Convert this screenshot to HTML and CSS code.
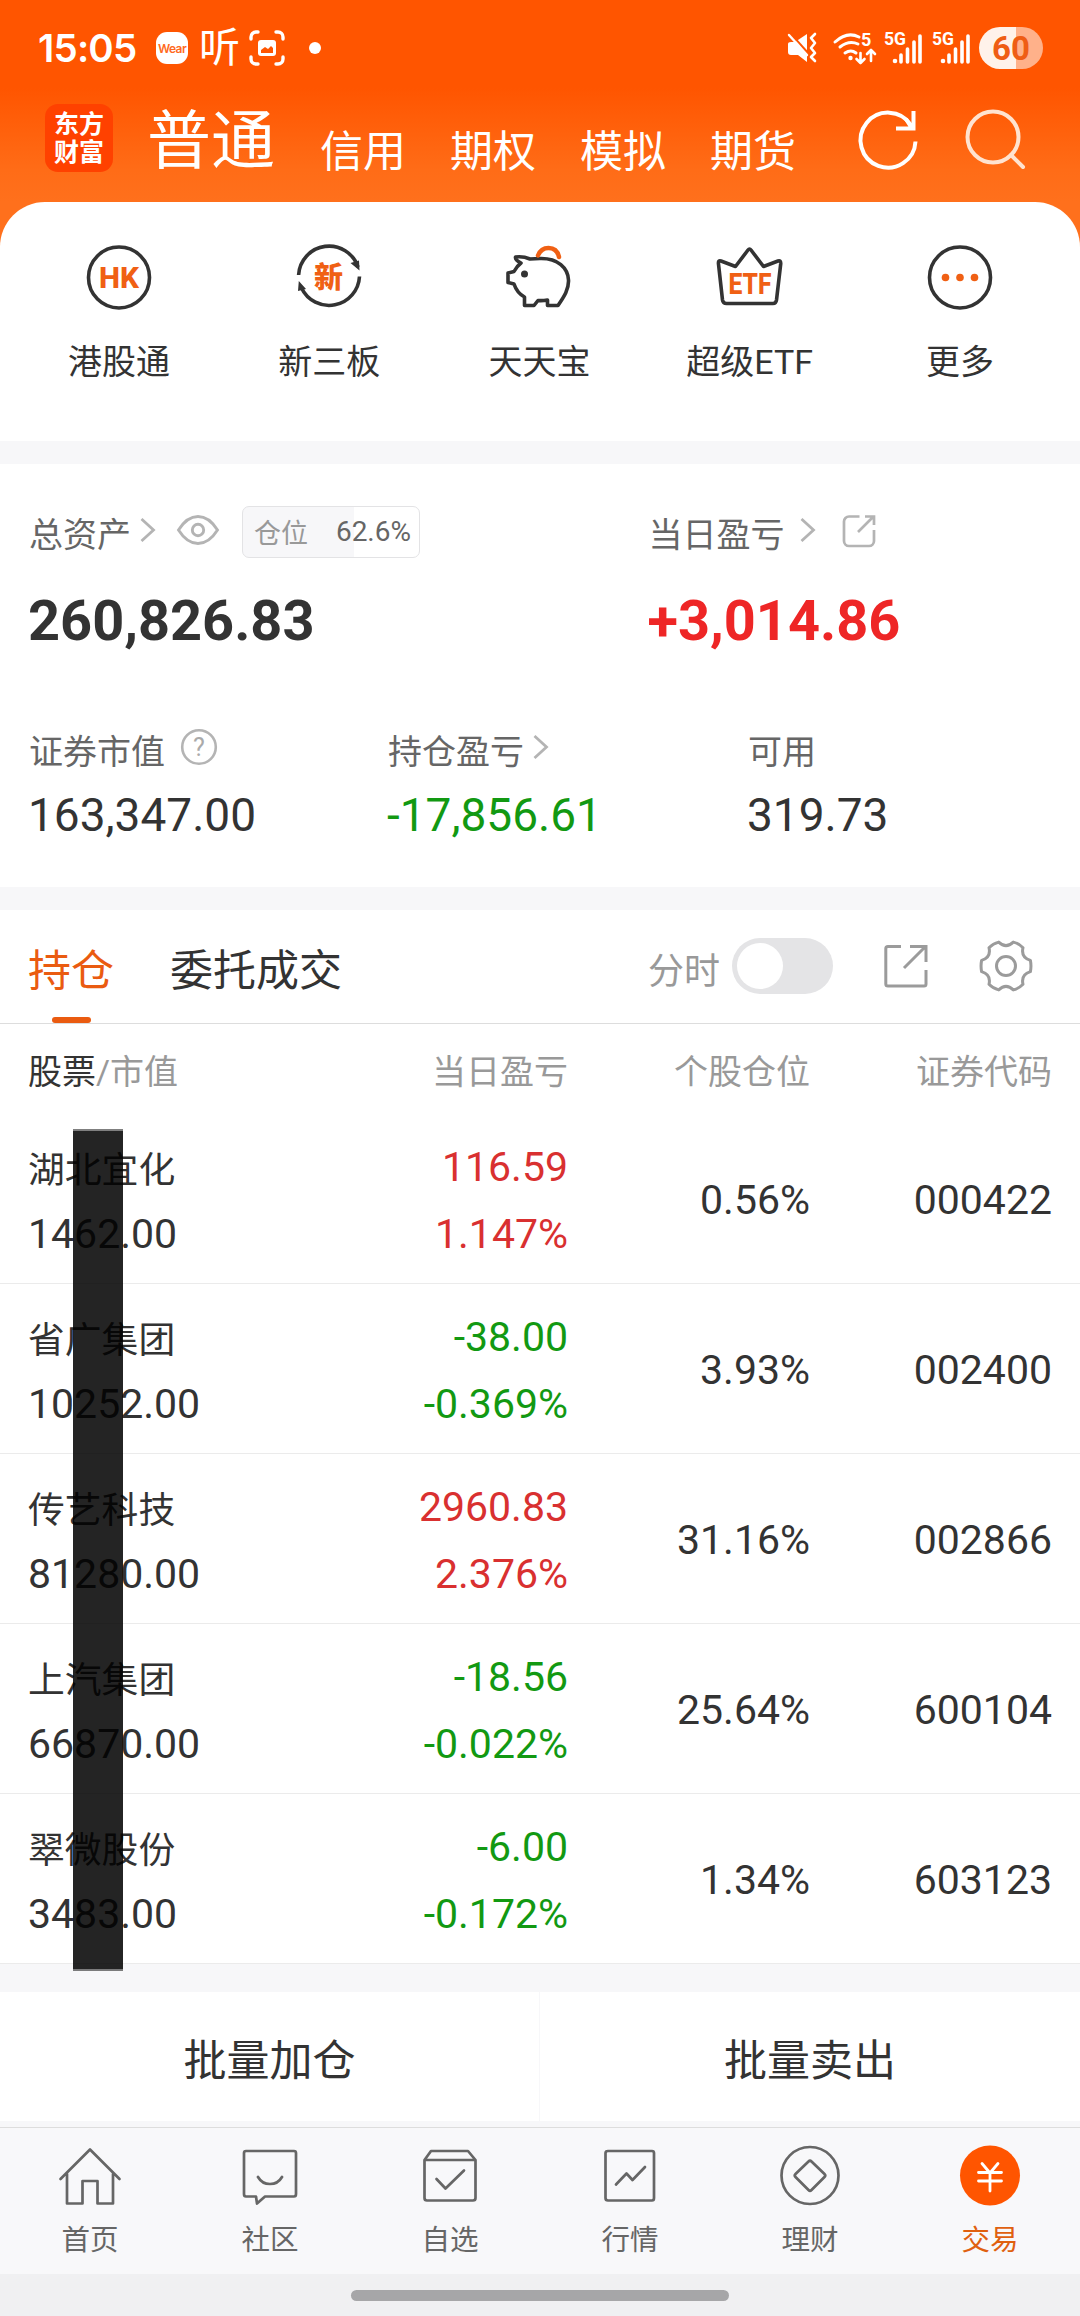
FILE: index.html
```html
<!DOCTYPE html>
<html lang="zh-CN">
<head>
<meta charset="utf-8">
<title>东方财富 - 交易</title>
<link rel="stylesheet" href="styles.css">
</head>
<body>
<header class="top">
  <div class="status">
    <span class="clock">15:05</span>
    <span class="wear">Wear</span>
    <span class="listen">听</span>
    <svg class="shot" width="36" height="36" viewBox="0 0 36 36" fill="none" stroke="#fff" stroke-width="3.4" stroke-linecap="round"><path d="M2 9V7a5 5 0 0 1 5-5h2M27 2h2a5 5 0 0 1 5 5v2M34 27v2a5 5 0 0 1-5 5h-2M9 34H7a5 5 0 0 1-5-5v-2"/><rect x="9" y="10" width="18" height="16" rx="3" fill="#fff" stroke="none"/><path d="M12 23v-3l4-3 3 2 3-3 2 2v5z" fill="#ff5500" stroke="none"/></svg>
    <span class="dot"></span>
    <div class="status-right">
      <svg width="30" height="30" viewBox="0 0 30 30"><path d="M8 9L20 1v18zM1 11q0-2 3-2h4l12 12v8l-9-7H4q-3 0-3-3z" fill="#fff"/><path d="M4 1l18 20" stroke="#ff5500" stroke-width="2"/><path d="M2 2l18 20" stroke="#fff" stroke-width="2.400" stroke-linecap="round"/><path d="M28 1l-4 4 4 5-4 5 4 5-4 4 4 4" fill="none" stroke="#fff" stroke-width="2.600" stroke-linecap="round" stroke-linejoin="round"/></svg>
      <svg class="wifi" width="44" height="42" viewBox="0 -4 44 42" fill="none" stroke="#fff" stroke-width="3" stroke-linecap="round"><path d="M2 11q12-11 24-5M7 16q9-7 18-3M12 22q6-4 11 0"/><circle cx="17.5" cy="27" r="2.2" fill="#fff" stroke="none"/><path d="M27.500 22v10m-4-4l4 4 4-4M38 30V19m-4 4l4-4 4 4" stroke-width="2.600" stroke-linejoin="round"/><text x="28" y="15" class="svg-small">5</text></svg>
      <svg class="signal" width="40" height="44" viewBox="0 -4 40 44"><text x="0" y="14.500" class="svg-small" textLength="22" lengthAdjust="spacingAndGlyphs">5G</text><circle cx="11" cy="31" r="2.300" fill="#fff"/><path d="M17 25v7M23.500 19v13M30 12v20M36 6v26" stroke="#fff" stroke-width="3.600" stroke-linecap="round"/></svg>
      <svg class="signal" width="40" height="44" viewBox="0 -4 40 44"><text x="0" y="14.500" class="svg-small" textLength="22" lengthAdjust="spacingAndGlyphs">5G</text><circle cx="11" cy="31" r="2.300" fill="#fff"/><path d="M17 25v7M23.500 19v13M30 12v20M36 6v26" stroke="#fff" stroke-width="3.600" stroke-linecap="round"/></svg>
      <span class="battery">60</span>
    </div>
  </div>
  <div class="titlebar">
    <div class="logo"><span>东方</span><span>财富</span></div>
    <h1>普通</h1>
    <nav class="modes"><span>信用</span><span>期权</span><span>模拟</span><span>期货</span></nav>
    <svg class="refresh" width="62" height="62" viewBox="0 0 62 62" fill="none" stroke="#fff" stroke-width="4"><path d="M58.500 33.500A27.500 27.500 0 1 1 54 17"/><path d="M56.500 3v17.500H39M54 19L49 11"/></svg>
    <svg class="search" width="62" height="62" viewBox="0 0 62 62" fill="none" stroke="#ffe3d0" stroke-width="4" stroke-linecap="round"><circle cx="28" cy="28" r="25.500"/><path d="M46 46l12 12"/></svg>
  </div>
</header>
<main>
  <section class="quick">
    <div class="quick-item"><svg width="66" height="66" viewBox="0 0 66 66"><circle cx="33" cy="32.500" r="30.500" class="ring"/><text x="13" y="43" class="mark" font-size="29" textLength="40" lengthAdjust="spacingAndGlyphs">HK</text></svg><span>港股通</span></div>
    <div class="quick-item"><svg width="66" height="66" viewBox="0 0 66 66"><path class="ring" d="M2.600 30A30.500 30.500 0 0 1 62 22M63.500 31.500A30.500 30.500 0 0 1 5.500 43"/><path d="M54.500 18l8.500-2.500.5 10zM2 46l.8-10 7.200 8z" fill="#333"/><text x="18" y="43" class="mark cjk" font-size="29">新</text></svg><span>新三板</span></div>
    <div class="quick-item"><svg width="66" height="66" viewBox="0 0 66 66"><path class="ring" stroke-linejoin="round" d="M9.500 12Q17 11 24 14Q29 13.500 34 13.500C52 13 62 23 62.500 35C63 45 57 53 52 60.500H41.500V55Q36 56 32 55.500L28 60.500H18.500V52Q11 48 8 39L2 37.500V28L8 26.500Q11 21 15 18Q9 15 9.500 12z"/><circle cx="18.500" cy="29" r="3.500" fill="#333"/><path d="M32 10.500Q35 3 42.500 3Q51 3 53 12" fill="none" stroke="#f06014" stroke-width="4.500" stroke-linecap="round"/></svg><span>天天宝</span></div>
    <div class="quick-item"><svg width="66" height="66" viewBox="0 0 66 66"><path class="ring" stroke-linejoin="round" d="M4 16L18.500 21.500L31 5Q32.500 3 34 5L46.500 21.500L61 16Q64 15 63.700 19L59.500 55Q59 58.500 56 58.500H9.500Q6 58.500 5.500 55L1.500 19Q1 15 4 16z"/><text x="11.500" y="48.500" class="mark" font-size="30" textLength="43" lengthAdjust="spacingAndGlyphs">ETF</text></svg><span>超级ETF</span></div>
    <div class="quick-item"><svg width="66" height="66" viewBox="0 0 66 66"><circle cx="33" cy="32.500" r="30.500" class="ring"/><g fill="#f06014"><circle cx="18.500" cy="32.500" r="3.800"/><circle cx="33" cy="32.500" r="3.800"/><circle cx="47.500" cy="32.500" r="3.800"/></g></svg><span>更多</span></div>
  </section>

  <section class="assets">
    <div class="summary">
      <div class="total">
        <div class="label"><span>总资产</span><svg class="chev" width="16" height="26" viewBox="0 0 16 26"><path d="M1.500 2l12 11-12 11"/></svg>
          <svg class="eye" width="44" height="32" viewBox="0 0 44 32" fill="none" stroke="#b4b4b4" stroke-width="2.900"><path d="M2.500 16Q11 2.500 22 2.500T41.500 16Q33 29.500 22 29.500T2.500 16z"/><circle cx="22" cy="16" r="5.700"/></svg>
          <div class="ratio"><em>仓位</em><b>62.6%</b></div></div>
        <strong>260,826.83</strong>
      </div>
      <div>
        <div class="label"><span>当日盈亏</span><svg class="chev wide" width="16" height="26" viewBox="0 0 16 26"><path d="M1.500 2l12 11-12 11"/></svg>
          <svg class="share" width="34" height="34" viewBox="0 0 34 34" fill="none" stroke="#b4b4b4" stroke-width="2.700"><path d="M17.500 2.500H7a5 5 0 0 0-5 5V27a5 5 0 0 0 5 5h20a5 5 0 0 0 5-5V16M16 18L31 3M23 2.500h9V11"/></svg></div>
        <strong class="hot">+3,014.86</strong>
      </div>
    </div>
    <div class="details">
      <div><div class="label"><span>证券市值</span><svg class="help" width="38" height="38" viewBox="0 0 38 38"><circle cx="19" cy="19" r="16.800"/><text x="19" y="28" text-anchor="middle">?</text></svg></div><p>163,347.00</p></div>
      <div><div class="label"><span>持仓盈亏</span><svg class="chev" width="16" height="26" viewBox="0 0 16 26"><path d="M1.500 2l12 11-12 11"/></svg></div><p class="down">-17,856.61</p></div>
      <div><div class="label"><span>可用</span></div><p>319.73</p></div>
    </div>
  </section>

  <section class="holdings">
    <div class="tabs">
      <span class="tab active">持仓</span><span class="tab">委托成交</span>
      <span class="minute">分时</span><span class="switch"></span>
      <svg class="open" width="44" height="44" viewBox="0 0 44 44" fill="none" stroke="#9b9b9b" stroke-width="3"><path d="M17 2.500H4Q1.800 2.500 1.800 4.500V40Q1.800 42 4 42H40Q42 42 42 40V26M20 24L41 3M26 2.500h16V18"/></svg>
      <svg class="gear" width="54" height="54" viewBox="-27 -27 54 54" fill="none" stroke="#9b9b9b" stroke-width="3" stroke-linejoin="round"><path d="M24.400-5.600Q25.500 0 24.400 5.600Q14.700 8.500 17 18.300Q13 22.500 7.300 23.900Q0 17-7.300 23.900Q-13 22.500-17 18.300Q-14.700 8.500-24.400 5.600Q-25.500 0-24.400-5.600Q-14.700-8.500-17-18.300Q-13-22.500-7.300-23.900Q0-17 7.300-23.900Q13-22.500 17-18.300Q14.700-8.500 24.400-5.600z"/><circle r="9.500"/></svg>
    </div>
    <div class="row thead"><span><i>股票</i>/市值</span><span>当日盈亏</span><span>个股仓位</span><span>证券代码</span></div>
    <div class="row"><div class="stock"><span>湖北宜化</span><span>1462.00</span></div><div class="pnl up"><span>116.59</span><span>1.147%</span></div><span>0.56%</span><span>000422</span></div>
    <div class="row"><div class="stock"><span>省广集团</span><span>10252.00</span></div><div class="pnl down"><span>-38.00</span><span>-0.369%</span></div><span>3.93%</span><span>002400</span></div>
    <div class="row"><div class="stock"><span>传艺科技</span><span>81280.00</span></div><div class="pnl up"><span>2960.83</span><span>2.376%</span></div><span>31.16%</span><span>002866</span></div>
    <div class="row"><div class="stock"><span>上汽集团</span><span>66870.00</span></div><div class="pnl down"><span>-18.56</span><span>-0.022%</span></div><span>25.64%</span><span>600104</span></div>
    <div class="row"><div class="stock"><span>翠微股份</span><span>3483.00</span></div><div class="pnl down"><span>-6.00</span><span>-0.172%</span></div><span>1.34%</span><span>603123</span></div>
    <div class="mask"></div>
  </section>

  <section class="batch"><span>批量加仓</span><span>批量卖出</span></section>
</main>
<nav class="bottom">
  <div><svg width="64" height="64" viewBox="0 0 64 64"><path d="M2.500 34L32 4.500L61.500 34M9 29V58.500H24.500V36H39.500V58.500H55V29"/></svg><span>首页</span></div>
  <div><svg width="64" height="64" viewBox="0 0 64 64"><path d="M8 6H56Q58 6 58 8V49Q58 51.500 56 51.500H27L19 58.500L18 51.500H8Q6 51.500 6 49V8Q6 6 8 6zM20 32Q24 39 32 39T44 32"/></svg><span>社区</span></div>
  <div><svg width="64" height="64" viewBox="0 0 64 64"><path d="M6.500 15L13 6H50L57.500 15V53Q57.500 55.500 55 55.500H9Q6.500 55.500 6.500 53zM6.500 15H57.500M18.500 34L27.500 43.500L46 25.500"/></svg><span>自选</span></div>
  <div><svg width="64" height="64" viewBox="0 0 64 64"><path d="M10 6H54Q56 6 56 8V53Q56 55.500 54 55.500H10Q7.500 55.500 7.500 53V8Q7.500 6 10 6zM18 39.500L28.500 28.500L34.500 35L47 22"/></svg><span>行情</span></div>
  <div><svg width="64" height="64" viewBox="0 0 64 64"><circle cx="32" cy="30.500" r="28.500"/><path d="M30.500 16.500Q32 15 33.500 16.500L46.500 29Q48 30.500 46.500 32L33.500 45Q32 46.500 30.500 45L17.500 32Q16 30.500 17.500 29z"/></svg><span>理财</span></div>
  <div class="current"><svg width="64" height="64" viewBox="0 0 64 64"><circle cx="32" cy="30.500" r="30" fill="#ff5500" stroke="none"/><path d="M24 18.500L32 28L40 18.500M20.500 27.500H43.500M20.500 36H43.500M32 28V46" stroke="#fff" stroke-width="2.800"/></svg><span>交易</span></div>
</nav>
<footer class="gesture"><span></span></footer>
</body>
</html>
```
FILE: styles.css
```css
* { box-sizing: border-box; }
body {
  margin: 0;
  width: 1080px;
  height: 2316px;
  overflow: hidden;
  background: #f7f7f9;
  color: #333;
  font-family: Roboto, "Noto Sans CJK SC", sans-serif;
  font-size: 34px;
}
svg { display: block; flex: none; overflow: visible; }
h1, p { margin: 0; font-weight: 400; }

/* header */
.top {
  height: 250px;
  background: linear-gradient(#ff5500 0, #ff5500 88px, #ff6c17 170px, #ff701c 202px);
  color: #fff;
}
.status { height: 96px; display: flex; align-items: center; padding: 0 37px 0 38px; }
.clock { width: 100px; font: 600 38.5px/40px Inter, sans-serif; letter-spacing: -.8px; white-space: nowrap; }
.wear {
  width: 32px; height: 32px; margin-left: 18px;
  border-radius: 11px; background: #fff; color: #ff6a22;
  font: 600 12px/33px Inter, sans-serif; letter-spacing: -.6px; text-align: center;
}
.listen { margin-left: 11px; font-size: 41px; line-height: 48px; width: 41px; }
.shot { margin-left: 9px; }
.dot { width: 12px; height: 12px; margin-left: 24px; border-radius: 50%; background: #fff; }
.status-right { margin-left: auto; display: flex; align-items: center; }
.wifi { margin-left: 16px; }
.signal { margin-left: 7px; }
.signal + .signal { margin-left: 8px; }
.svg-small { font: 700 18px Roboto, sans-serif; fill: #fff; stroke: none; }
.battery {
  width: 64px; height: 42px; margin-left: 7px;
  border-radius: 21px;
  background: linear-gradient(90deg, #fff2ea 58%, #ffb18a 58%);
  color: #ef5d14;
  font-size: 33px; font-weight: 700; line-height: 43px; text-align: center;
}
.titlebar { height: 106px; display: flex; align-items: center; padding-left: 45px; }
.logo {
  width: 68px; height: 68px; margin-bottom: 22px; padding-top: 7px;
  display: flex; flex-direction: column; align-items: center;
  border-radius: 13px; background: #ff4100;
  font-size: 25px; font-weight: 700; line-height: 28px;
}
.titlebar h1 { margin: 0 0 14px 34px; font-size: 64px; line-height: 72px; }
.modes { display: flex; gap: 44px; margin: 5px 0 0 45px; font-size: 43px; line-height: 50px; }
.refresh { margin: 0 0 21px 61px; }
.search { margin: 0 0 19px 46px; }

/* shortcuts */
main { margin-top: -48px; }
.quick {
  height: 239px; padding: 43px 15px 0 14px;
  display: grid; grid-template-columns: repeat(5, 1fr);
  border-radius: 45px 45px 0 0; background: #fff;
}
.quick-item { display: flex; flex-direction: column; align-items: center; }
.quick-item span { margin-top: 31px; line-height: 40px; }
.ring { fill: none; stroke: #333; stroke-width: 3.6; }
.mark { font-family: Roboto, sans-serif; font-weight: 800; fill: #f06014; }
.mark.cjk { font-family: "Noto Sans CJK SC", sans-serif; }

/* assets */
.assets { height: 423px; margin-top: 23px; padding: 42px 29px 0; background: #fff; }
.label { display: flex; align-items: center; height: 51px; color: #666; }
.label > span { padding-top: 6px; line-height: 46px; }
.chev { margin: 0 0 4px 9px; fill: none; stroke: #b4b4b4; stroke-width: 2.8; }
.chev.wide { margin-left: 15px; }
.summary { display: grid; grid-template-columns: 619.500px 1fr; }
.summary strong { display: block; margin: 29px 0 0 -1px; font-size: 55.9px; line-height: 70px; }
.eye { margin: 0 0 3px 20px; }
.share { margin: 0 0 1px 26px; }
.hot { color: #ee2626; }
.ratio {
  width: 178px; height: 52px; margin-left: 22px; padding: 0 8px 0 11px;
  display: flex; flex: none; justify-content: space-between; align-items: center;
  border: 1px solid #e3e3e5; border-radius: 7px;
  background: linear-gradient(90deg, #f7f7f9 63%, #fff 63%);
}
.ratio em { font-style: normal; font-size: 27px; color: #999; margin-bottom: 1px; }
.ratio b { font-weight: 400; font-size: 28px; }
.details { display: grid; grid-template-columns: 359px 360px 1fr; margin-top: 67px; }
.details p { font-size: 46px; line-height: 56px; margin: 13px 0 0 -1px; }
.help { margin: 0 0 4px 15px; }
.help circle { fill: none; stroke: #b4b4b4; stroke-width: 2.6; }
.help text { font-size: 25px; fill: #aaa; }
.up { color: #d93030; }
.down { color: #129912; }

/* holdings */
.holdings { position: relative; margin-top: 23px; background: #fff; }
.tabs {
  height: 114px; padding-left: 28px;
  display: flex; align-items: center;
  border-bottom: 1px solid #ddd;
}
.tab { font-size: 43px; line-height: 113px; padding-top: 5px; margin-right: 56px; height: 113px; }
.tab.active { position: relative; color: #ea5b10; }
.tab.active::after {
  content: ""; position: absolute; left: 24px; bottom: 0;
  width: 39px; height: 6px; border-radius: 3px; background: #ea5b10;
}
.minute { margin: 2px 0 0 250px; font-size: 36px; color: #999; }
.switch { width: 101px; height: 56px; margin: 0 0 2px 12px; padding: 5px; border-radius: 28px; background: #e4e4e6; }
.switch::before { content: ""; display: block; width: 46px; height: 46px; border-radius: 50%; background: #fff; }
.open { margin: 0 0 1px 51px; }
.gear { margin: 0 0 1px 51px; }
.row {
  height: 170px; padding: 2px 28px 0 28px;
  display: grid; grid-template-columns: 240px 300px 242px 242px; align-items: center;
  border-bottom: 1px solid #ebebeb;
  font-size: 41px; text-align: right;
}
.row.thead { height: 90px; padding-top: 0; border: 0; font-size: 34px; color: #999; }
.thead i { font-style: normal; color: #333; }
.row > :first-child { text-align: left; }
.stock, .pnl { display: flex; flex-direction: column; padding-top: 2px; line-height: 67px; white-space: nowrap; }
.stock span:first-child { font-size: 36.8px; position: relative; top: 3px; }
.mask {
  position: absolute; left: 73px; top: 219px; width: 50px; height: 842px;
  background: rgba(0, 0, 0, .86);
  background-clip: padding-box;
  border: solid rgba(0, 0, 0, .5); border-width: 2px 0;
}

/* actions */
.batch { height: 129px; margin-top: 28px; display: grid; grid-template-columns: 539px 1fr; gap: 1px; }
.batch span {
  display: flex; align-items: center; justify-content: center;
  padding-top: 9px; background: #fff; font-size: 43px; line-height: 50px;
}

/* tab bar */
.bottom {
  height: 147px; margin-top: 6px; padding-top: 19px;
  display: grid; grid-template-columns: repeat(6, 1fr);
  border-top: 1px solid #ddd; background: #f8f8fa; color: #666;
}
.bottom div { display: flex; flex-direction: column; align-items: center; font-size: 28.5px; }
.bottom svg { margin-top: -2px; fill: none; stroke: #666; stroke-width: 2.7; stroke-linejoin: round; stroke-linecap: round; }
.bottom span { margin-top: 14px; line-height: 36px; }
.bottom .current { color: #e0600f; }
.gesture { height: 42px; padding-top: 16px; background: #f0f0f2; }
.gesture span { display: block; width: 378px; height: 11px; margin: 0 auto; border-radius: 6px; background: #a6a6a8; }
```
